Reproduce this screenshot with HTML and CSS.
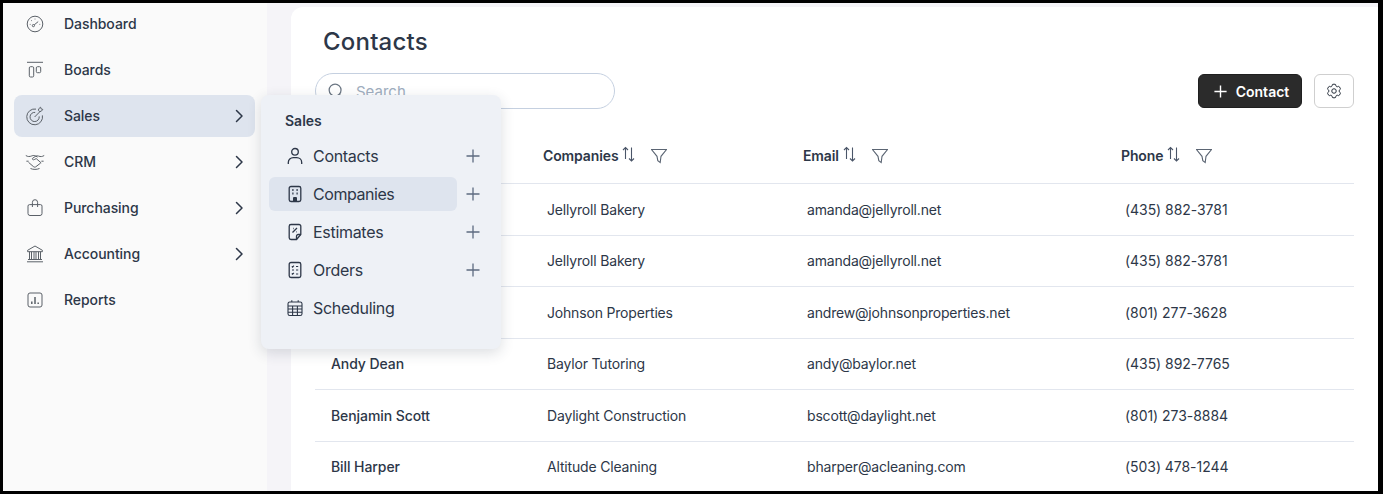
FILE: index.html
```html
<!DOCTYPE html>
<html lang="en">
<head>
<meta charset="utf-8">
<title>Contacts</title>
<link rel="stylesheet" href="styles.css">
</head>
<body>
<div class="frame">
  <aside class="sidebar">
    <nav class="nav">
      <a class="nav-item"><svg class="nav-icon" viewBox="0 0 20 20"><circle cx="10" cy="10" r="7.8"/><path d="M9.2 10.9 13.2 7.6"/><circle cx="8.4" cy="11.6" r="1.1"/><path d="M6.2 6.6h.7M10 4.7v.7M4.8 10.4h.7M14.5 10.4h.7"/></svg><span>Dashboard</span></a>
      <a class="nav-item"><svg class="nav-icon" viewBox="0 0 20 20"><path d="M2 2.300h16"/><rect x="4.300" y="6.700" width="4.400" height="10.300" rx="1.200"/><rect x="11.300" y="6.700" width="4.400" height="6" rx="1.200"/></svg><span>Boards</span></a>
      <a class="nav-item active"><svg class="nav-icon" viewBox="0 0 20 20"><path d="M17.400 9.400a7.900 7.900 0 1 1-6.400-6.300"/><path d="M14.200 10.400a4.600 4.600 0 1 1-4-4"/><path d="M9.600 11 15.400 5.200"/><path d="M13.600 4.700V2.900l2-1.700.5 1.700 1.700.5-1.700 2h-1.800z"/></svg><span>Sales</span><svg class="chevron" viewBox="0 0 16 16"><path d="m5.500 2.500 5.500 5.500-5.500 5.500"/></svg></a>
      <a class="nav-item"><svg class="nav-icon" viewBox="0 0 20 20"><path d="M.8 3.500c2 1.300 3.800 1.300 6 .4 1.500-.6 2.600-.6 4 .2l1.800 1M19.200 3.500c-2 1.200-3.600 1.400-5.600.6-1.300-.5-2.300-.3-3.400.4L7.600 6.300c-.9.700.4 2 1.600 1.300l2-1 5 4.300"/><path d="m3.500 10.300 4.800 4.200c.9.800 1.900.8 2.600.2l4.800-3.700"/><path d="M1.400 9.200h2.200M16.400 9.200h2.200M5.500 16.500c2.800 1.200 6 1.200 9 0"/></svg><span>CRM</span><svg class="chevron" viewBox="0 0 16 16"><path d="m5.500 2.500 5.500 5.500-5.500 5.500"/></svg></a>
      <a class="nav-item"><svg class="nav-icon" viewBox="0 0 20 20"><path d="M4.500 6.600h11a1.500 1.500 0 0 1 1.500 1.500v7.400a2 2 0 0 1-2 2H5a2 2 0 0 1-2-2V8.100a1.500 1.500 0 0 1 1.500-1.500z"/><path d="M7.400 9V4.300a2.600 2.600 0 0 1 5.200 0V9"/></svg><span>Purchasing</span><svg class="chevron" viewBox="0 0 16 16"><path d="m5.500 2.500 5.500 5.500-5.500 5.500"/></svg></a>
      <a class="nav-item"><svg class="nav-icon" viewBox="0 0 20 20"><path d="M10 2 2.600 6.300v1.400h14.800V6.300z"/><path d="M4.500 7.700v7.600M6.500 7.700v7.600M9 7.700v7.600M11 7.700v7.600M13.500 7.700v7.600M15.500 7.700v7.600M3 15.500h14M2 17.800h16"/></svg><span>Accounting</span><svg class="chevron" viewBox="0 0 16 16"><path d="m5.500 2.500 5.500 5.500-5.500 5.500"/></svg></a>
      <a class="nav-item"><svg class="nav-icon" viewBox="0 0 20 20"><rect x="3" y="3" width="14" height="14" rx="2"/><path class="thick" d="M6.800 14v-2.500M10 14V7M13.200 14v-1.500"/></svg><span>Reports</span></a>
    </nav>
  </aside>

  <div class="workspace">
    <main class="card">
      <h1 class="title">Contacts</h1>
      <div class="toolbar">
        <label class="search">
          <svg class="search-icon" viewBox="0 0 20 20"><circle cx="9" cy="9" r="6.600"/><path d="m14 14 4 4"/></svg>
          <span class="placeholder">Search</span>
        </label>
        <div class="actions">
          <button class="btn-primary"><svg viewBox="0 0 16 16"><path d="M8 1.500v13M1.500 8h13"/></svg>Contact</button>
          <button class="btn-settings"><svg viewBox="0 0 24 24"><path d="M9.594 3.940c.09-.542.56-.94 1.110-.94h2.593c.55 0 1.020.398 1.110.94l.213 1.281c.063.374.313.686.645.87.074.04.147.083.22.127.325.196.72.257 1.075.124l1.217-.456a1.125 1.125 0 0 1 1.370.49l1.296 2.247a1.125 1.125 0 0 1-.26 1.431l-1.003.827c-.293.241-.438.613-.43.992a7.723 7.723 0 0 1 0 .255c-.008.378.137.75.43.991l1.004.827c.424.35.534.955.26 1.430l-1.298 2.247a1.125 1.125 0 0 1-1.369.491l-1.217-.456c-.355-.133-.75-.072-1.076.124a6.470 6.470 0 0 1-.22.128c-.331.183-.581.495-.644.869l-.213 1.281c-.09.543-.56.94-1.110.94h-2.594c-.55 0-1.019-.398-1.110-.94l-.213-1.281c-.062-.374-.312-.686-.644-.87a6.520 6.520 0 0 1-.22-.127c-.325-.196-.72-.257-1.076-.124l-1.217.456a1.125 1.125 0 0 1-1.369-.49l-1.297-2.247a1.125 1.125 0 0 1 .26-1.431l1.004-.827c.292-.24.437-.613.43-.991a6.932 6.932 0 0 1 0-.255c.007-.38-.138-.751-.43-.992l-1.004-.827a1.125 1.125 0 0 1-.26-1.430l1.297-2.247a1.125 1.125 0 0 1 1.370-.491l1.216.456c.356.133.751.072 1.076-.124.072-.044.146-.086.22-.128.332-.183.582-.495.644-.869l.214-1.280Z"/><path d="M15 12a3 3 0 1 1-6 0 3 3 0 0 1 6 0Z"/></svg></button>
        </div>
      </div>

      <div class="table">
        <div class="row head">
          <div class="th"></div>
          <div class="th"><span>Companies</span><svg class="sort" viewBox="0 0 15 16"><path d="M4.500 13V1.500M2 4l2.500-2.500L7 4M10.500 1.500V15M8 12.500l2.500 2.500 2.500-2.500"/></svg><svg class="filter" viewBox="0 0 16 16"><path d="M.5 1.500h15L10 8.300l-.8 6.200-2.400-1.800L6 8.300z"/></svg></div>
          <div class="th"><span>Email</span><svg class="sort" viewBox="0 0 15 16"><path d="M4.500 13V1.500M2 4l2.500-2.500L7 4M10.500 1.500V15M8 12.500l2.500 2.500 2.500-2.500"/></svg><svg class="filter" viewBox="0 0 16 16"><path d="M.5 1.500h15L10 8.300l-.8 6.200-2.400-1.800L6 8.300z"/></svg></div>
          <div class="th"><span>Phone</span><svg class="sort" viewBox="0 0 15 16"><path d="M4.500 13V1.500M2 4l2.500-2.500L7 4M10.500 1.500V15M8 12.500l2.500 2.500 2.500-2.500"/></svg><svg class="filter" viewBox="0 0 16 16"><path d="M.5 1.500h15L10 8.300l-.8 6.200-2.400-1.800L6 8.300z"/></svg></div>
        </div>
        <div class="row"><div class="td name"></div><div class="td">Jellyroll Bakery</div><div class="td">amanda@jellyroll.net</div><div class="td phone">(435) 882-3781</div></div>
        <div class="row"><div class="td name"></div><div class="td">Jellyroll Bakery</div><div class="td">amanda@jellyroll.net</div><div class="td phone">(435) 882-3781</div></div>
        <div class="row"><div class="td name"></div><div class="td">Johnson Properties</div><div class="td">andrew@johnsonproperties.net</div><div class="td phone">(801) 277-3628</div></div>
        <div class="row"><div class="td name">Andy Dean</div><div class="td">Baylor Tutoring</div><div class="td">andy@baylor.net</div><div class="td phone">(435) 892-7765</div></div>
        <div class="row"><div class="td name">Benjamin Scott</div><div class="td">Daylight Construction</div><div class="td">bscott@daylight.net</div><div class="td phone">(801) 273-8884</div></div>
        <div class="row"><div class="td name">Bill Harper</div><div class="td">Altitude Cleaning</div><div class="td">bharper@acleaning.com</div><div class="td phone">(503) 478-1244</div></div>
      </div>
    </main>
  </div>

  <div class="flyout">
    <div class="flyout-title">Sales</div>
    <div class="fly-row"><a class="fly-link"><svg viewBox="0 0 20 20"><circle cx="10" cy="5.800" r="3.300"/><path d="M3.300 18v-1.500c0-2.800 2.200-4.800 5-4.800h3.400c2.800 0 5 2 5 4.800V18"/></svg>Contacts</a><svg class="plus" viewBox="0 0 16 16"><path d="M8 1.500v13M1.500 8h13"/></svg></div>
    <div class="fly-row"><a class="fly-link current"><svg viewBox="0 0 20 20"><rect x="4.200" y="2.500" width="11.600" height="15" rx="1.800"/><path class="thick" d="M7.300 6h1.200M11.500 6h1.200M7.300 9.500h1.200M11.500 9.500h1.200"/><path class="fill" d="M8 17.500v-3.500a1 1 0 0 1 1-1h2a1 1 0 0 1 1 1v3.500z"/></svg>Companies</a><svg class="plus" viewBox="0 0 16 16"><path d="M8 1.500v13M1.500 8h13"/></svg></div>
    <div class="fly-row"><a class="fly-link"><svg viewBox="0 0 20 20"><path d="M11.500 17.500H6a1.800 1.800 0 0 1-1.800-1.800V4.300A1.800 1.800 0 0 1 6 2.500h8a1.800 1.800 0 0 1 1.800 1.800v8.200z"/><path d="M15.800 12.500h-2.600a1.700 1.700 0 0 0-1.700 1.700v3.300M7.500 10.500 12 6M8 6.500h.6M11.200 9.800h.6"/></svg>Estimates</a><svg class="plus" viewBox="0 0 16 16"><path d="M8 1.500v13M1.500 8h13"/></svg></div>
    <div class="fly-row"><a class="fly-link"><svg viewBox="0 0 20 20"><rect x="4.200" y="2.500" width="11.600" height="15" rx="1.800"/><path class="fine" d="m6.800 6.300.8.800 1.300-1.500M11 6.500h2.200M7 10h2M11 10h2.200M6.800 13.500l.8.800 1.300-1.500M11 14h2.200"/></svg>Orders</a><svg class="plus" viewBox="0 0 16 16"><path d="M8 1.500v13M1.500 8h13"/></svg></div>
    <div class="fly-row"><a class="fly-link"><svg class="cal" viewBox="0 0 20 20"><rect x="3" y="4" width="14" height="13.500" rx="1.800"/><path d="M3 8h14M3 11h14M3 14.200h14M7.600 8v9.500M12.400 8v9.500M6.800 2.300V4M13.200 2.300V4"/></svg>Scheduling</a></div>
  </div>
</div>
</body>
</html>
```

FILE: styles.css
```css
* { box-sizing: border-box; }
html, body { margin: 0; padding: 0; }
body {
  width: 1383px;
  height: 494px;
  overflow: hidden;
  font-family: Inter, "Liberation Sans", sans-serif;
  color: #2d3748;
}
svg { fill: none; stroke: currentColor; flex: none; display: block; }

.frame {
  position: relative;
  display: flex;
  width: 1383px;
  height: 494px;
  border: solid #000;
  border-width: 3px 5px 3px 3px;
  overflow: hidden;
  background: #f5f4f8;
}

.sidebar {
  flex: none;
  width: 264px;
  background: #fafafa;
  padding-right: 12px;
  padding-left: 11px;
}
.nav { display: flex; flex-direction: column; gap: 4px; }
.nav-item {
  display: flex;
  align-items: center;
  height: 42px;
  padding-left: 11px;
  border-radius: 8px;
  font-size: 14px;
  font-weight: 500;
  letter-spacing: -0.06px;
  color: #2d3748;
}
.nav-item span { margin: 0 0 2px 19px; flex: 1; }
.nav-item.active { background: #dee4ee; }
.nav-icon {
  width: 20px;
  height: 20px;
  color: #5b6168;
  stroke-width: 1;
}
.nav-icon .thick { stroke-width: 1.5; }
.chevron {
  width: 16px;
  height: 16px;
  margin-right: 8px;
  color: #2d3748;
  stroke-width: 1.5;
  stroke-linecap: round;
  stroke-linejoin: round;
}

.workspace {
  flex: 1;
  min-width: 0;
  padding: 4px 0 0 24px;
}
.card {
  height: 100%;
  background: #fff;
  border-radius: 12px 0 0 0;
  padding: 16px 24px 0;
  overflow: hidden;
}
.title {
  margin: 0 0 14px 8px;
  height: 36px;
  line-height: 38px;
  font-size: 24px;
  font-weight: 500;
  letter-spacing: 0.2px;
  color: #2d3748;
}

.toolbar {
  display: flex;
  align-items: center;
  justify-content: space-between;
  height: 36px;
}
.search {
  display: flex;
  align-items: center;
  width: 300px;
  height: 36px;
  padding-left: 11px;
  border: 1px solid #c5d0e0;
  border-radius: 18px;
}
.search-icon {
  width: 18px;
  height: 18px;
  color: #6b7683;
  stroke-width: 1.4;
}
.placeholder {
  margin-left: 11px;
  font-size: 15px;
  color: #a0aec0;
}
.actions { display: flex; gap: 12px; }
.btn-primary, .btn-settings {
  display: flex;
  align-items: center;
  justify-content: center;
  height: 34px;
  border-radius: 6px;
  font-family: inherit;
  padding: 0;
}
.btn-primary {
  width: 104px;
  padding-left: 2px;
  gap: 8px;
  background: #2b2b2b;
  border: 1px solid #1f1f1f;
  color: #fff;
  font-size: 14px;
  font-weight: 600;
}
.btn-primary svg { width: 15px; height: 15px; stroke-width: 1.5; }
.btn-settings {
  width: 40px;
  background: #fff;
  border: 1px solid #cfcfcf;
  color: #1f2733;
}
.btn-settings svg { width: 18px; height: 18px; stroke-width: 1.3; }

.table { margin-top: 18px; }
.row {
  display: grid;
  grid-template-columns: 216px 260px 318px 1fr;
  height: 51.6px;
  border-bottom: 1px solid #e2e6ee;
  font-size: 14px;
}
.row.head { height: 57px; }
.th {
  display: flex;
  align-items: center;
  padding-left: 12px;
  font-weight: 600;
  letter-spacing: -0.12px;
  color: #2d3748;
}
.sort {
  width: 15px;
  height: 16px;
  margin: -2px 0 0 3px;
  color: #4a5568;
  stroke-width: 1.1;
}
.filter {
  width: 16px;
  height: 16px;
  margin: 1px 0 0 15px;
  color: #5b6573;
  stroke-width: 1.1;
}
.td {
  display: flex;
  align-items: center;
  padding: 0 0 0.6px 16px;
  font-weight: 400;
  letter-spacing: -0.18px;
  color: #2d3748;
}
.td.phone { letter-spacing: -0.05px; }
.td.name { font-weight: 500; letter-spacing: -0.08px; }

.flyout {
  position: absolute;
  left: 258px;
  top: 92px;
  width: 240px;
  height: 254px;
  padding: 8px;
  background: #eef1f6;
  border-radius: 8px;
  box-shadow: 0 4px 14px rgba(40, 50, 70, 0.16);
}
.flyout-title {
  height: 36px;
  line-height: 36px;
  padding-left: 16px;
  font-size: 14px;
  font-weight: 600;
  color: #2d3748;
}
.fly-row {
  display: flex;
  align-items: center;
  gap: 8px;
  height: 34px;
  margin-bottom: 4px;
}
.fly-link {
  display: flex;
  align-items: center;
  gap: 8px;
  width: 188px;
  height: 34px;
  padding-left: 16px;
  border-radius: 6px;
  font-size: 16px;
  letter-spacing: -0.3px;
  color: #2d3748;
}
.fly-link.current { background: #dee4ee; letter-spacing: -0.45px; }
.fly-link svg {
  width: 20px;
  height: 20px;
  stroke-width: 1.3;
}
.fly-link .thick { stroke-width: 1.8; }
.fly-link .fine { stroke-width: 1.1; }
.fly-link svg.cal { stroke-width: 1.1; }
.fly-link .fill { fill: currentColor; stroke: none; }
.plus {
  width: 16px;
  height: 16px;
  color: #5d6b80;
  stroke-width: 1.3;
}
```
